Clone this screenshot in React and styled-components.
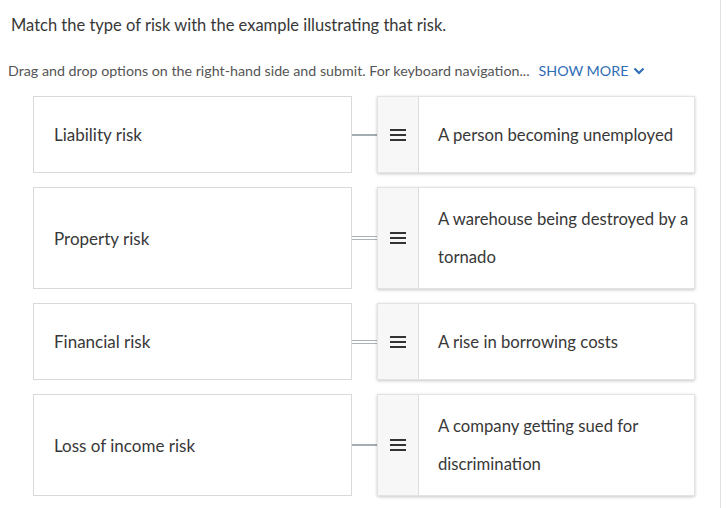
import React from "react";
import styled, { createGlobalStyle } from "styled-components";

const Global = createGlobalStyle`
  html, body { margin: 0; padding: 0; background: #fff; }
  body { font-family: "Lato", "Open Sans", sans-serif; color: #333; }
`;

const Page = styled.div`
  width: 721px;
  height: 508px;
  box-sizing: border-box;
  border-right: 1px solid #e2e2e2;
  overflow: hidden;
`;

const Title = styled.h1`
  margin: 0;
  padding: 14px 0 0 11px;
  font-size: 16.5px;
  font-weight: 400;
  color: #383838;
  line-height: 22px;
`;

const Instructions = styled.p`
  margin: 0;
  padding: 26px 0 0 8px;
  font-size: 14.25px;
  line-height: 18px;
  color: #555;
  display: flex;
  align-items: center;
  white-space: nowrap;
`;

const ShowMore = styled.span`
  color: #2f6db5;
  margin-left: 9px;
  display: inline-flex;
  align-items: center;
  gap: 5px;
`;

const List = styled.div`
  display: flex;
  flex-direction: column;
  gap: 14px;
  padding: 16px 0 0 33px;
`;

const Row = styled.div`
  display: flex;
  align-items: stretch;
  min-height: 77px;
`;

const Prompt = styled.div`
  width: 319px;
  box-sizing: border-box;
  border: 1px solid #d9d9d9;
  display: flex;
  align-items: center;
  padding-left: 20px;
  font-size: 17px;
  color: #383838;
`;

const Connector = styled.div`
  width: 25px;
  display: flex;
  align-items: center;
`;

const Line = styled.div`
  width: 100%;
  box-sizing: border-box;
  ${(p) =>
    p.$double
      ? `height: 4px; border-top: 1px solid #a9b3b8; border-bottom: 1px solid #a9b3b8;`
      : `height: 2px; background: #a3adb2;`}
`;

const Card = styled.div`
  width: 318px;
  box-sizing: border-box;
  display: flex;
  border: 1px solid #e3e3e3;
  box-shadow: 0 1px 3px rgba(0, 0, 0, 0.22);
  background: #fff;
`;

const Handle = styled.div`
  width: 40px;
  flex: none;
  background: #f7f7f7;
  border-right: 1px solid #dedede;
  display: flex;
  align-items: center;
  justify-content: center;
`;

const Answer = styled.div`
  flex: 1;
  display: flex;
  align-items: center;
  padding: 12px 2px 12px 19px;
  font-size: 16.7px;
  line-height: 38px;
  color: #383838;
  white-space: nowrap;
`;

const Hamburger = () => (
  <svg width="16" height="12" viewBox="0 0 16 12">
    <rect x="0" y="0" width="16" height="2" fill="#333" />
    <rect x="0" y="5" width="16" height="2" fill="#333" />
    <rect x="0" y="10" width="16" height="2" fill="#333" />
  </svg>
);

const Chevron = () => (
  <svg width="12" height="8" viewBox="0 0 12 8">
    <path d="M1.5 1.5 L6 6 L10.5 1.5" fill="none" stroke="#2f6db5" strokeWidth="2.2" />
  </svg>
);

const rows = [
  { prompt: "Liability risk", answer: ["A person becoming unemployed"], double: false },
  { prompt: "Property risk", answer: ["A warehouse being destroyed by a", "tornado"], double: true },
  { prompt: "Financial risk", answer: ["A rise in borrowing costs"], double: true },
  { prompt: "Loss of income risk", answer: ["A company getting sued for", "discrimination"], double: false },
];

export default function App() {
  return (
    <Page>
      <Global />
      <Title>Match the type of risk with the example illustrating that risk.</Title>
      <Instructions>
        Drag and drop options on the right-hand side and submit. For keyboard navigation...
        <ShowMore>
          SHOW MORE <Chevron />
        </ShowMore>
      </Instructions>
      <List>
        {rows.map((r) => (
          <Row key={r.prompt}>
            <Prompt>{r.prompt}</Prompt>
            <Connector>
              <Line $double={r.double} />
            </Connector>
            <Card>
              <Handle>
                <Hamburger />
              </Handle>
              <Answer>
                <div>
                  {r.answer.map((l, i) => (
                    <React.Fragment key={i}>
                      {i > 0 && <br />}
                      {l}
                    </React.Fragment>
                  ))}
                </div>
              </Answer>
            </Card>
          </Row>
        ))}
      </List>
    </Page>
  );
}
